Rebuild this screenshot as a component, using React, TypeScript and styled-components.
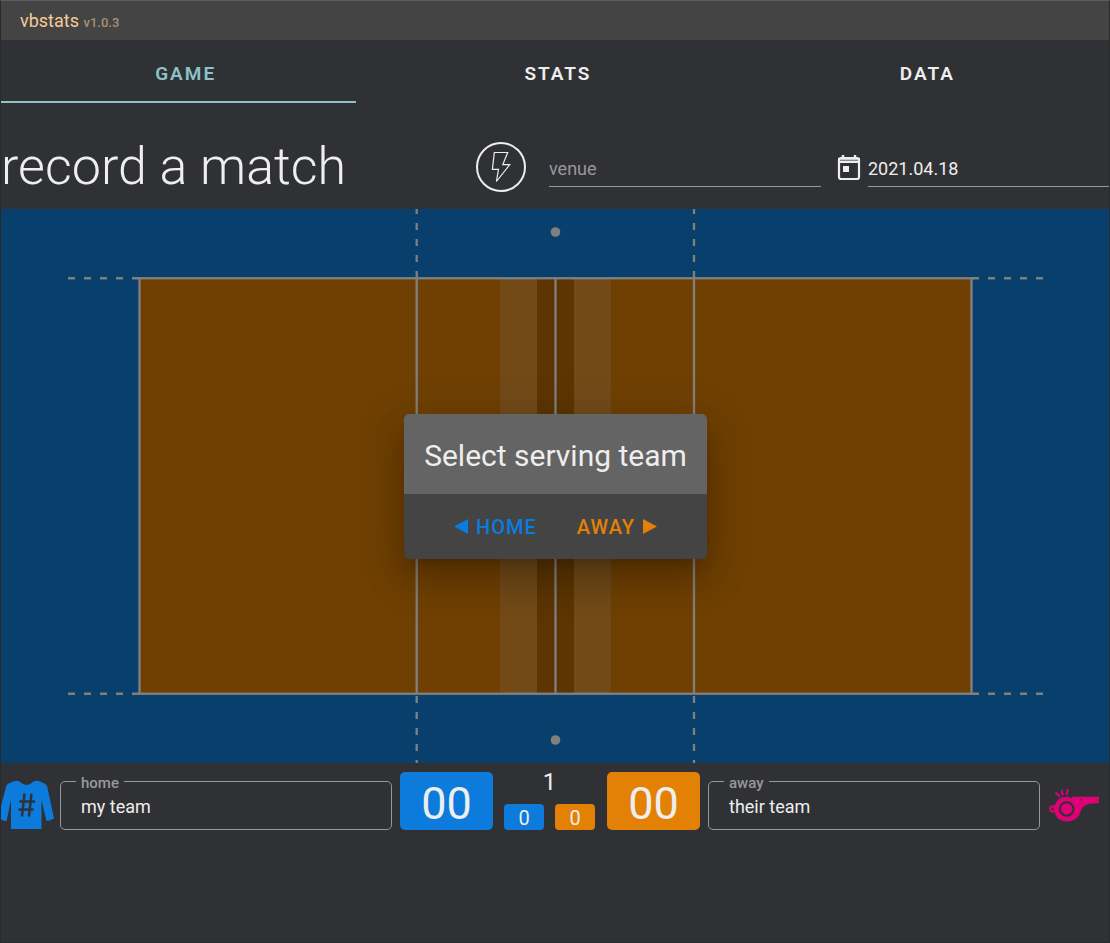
import React, { useState } from 'react';
import styled, { createGlobalStyle } from 'styled-components';

const color = {
  page: '#303135',
  bar: '#444444',
  text: '#eeeeee',
  muted: '#98989a',
  accent: '#8bc3c9',
  home: '#0d7bdc',
  away: '#e38107',
  line: '#808080',
  whistle: '#dd0077',
};

const GlobalStyle = createGlobalStyle`
  *, *::before, *::after { box-sizing: border-box; }
  html { background: ${color.page}; }
  body {
    margin: 0;
    font-family: Roboto, "Liberation Sans", sans-serif;
    color: ${color.text};
  }
  button, input { font-family: inherit; }
`;

const Shell = styled.div`
  min-height: 100vh;
  border: 1px solid #2a2a2c;
  border-top-color: #5a5b5f;
  background: ${color.page};
`;

const AppBar = styled.header`
  display: flex;
  align-items: center;
  height: 39px;
  padding: 2px 19px 0;
  background: ${color.bar};
`;

const Brand = styled.h1`
  margin: 0;
  font-size: 18px;
  line-height: 20px;
  font-weight: 400;
  color: #f5cb98;
`;

const Version = styled.small`
  font-size: 13px;
  font-weight: 500;
  color: #a88f74;
`;

const TabBar = styled.nav`
  display: flex;
`;

const Tab = styled.button<{ $active?: boolean }>`
  position: relative;
  flex: 1 1 auto;
  height: 63px;
  padding: 3px 24px 0;
  border: 0;
  background: none;
  color: ${(p) => (p.$active ? color.accent : color.text)};
  font-size: 19px;
  font-weight: 600;
  letter-spacing: 2px;
  cursor: pointer;
  &::after {
    content: '';
    display: ${(p) => (p.$active ? 'block' : 'none')};
    position: absolute;
    left: 0;
    right: 14px;
    bottom: 0;
    height: 2px;
    background: ${color.accent};
  }
`;

const MatchHeader = styled.section`
  display: grid;
  grid-template-columns: 1fr calc(25% - 5px) calc(25% - 5px);
  gap: 16px;
  align-items: center;
  height: 106px;
`;

const TitleCell = styled.div`
  display: flex;
  align-items: center;
  justify-content: space-between;
  padding: 22px 7px 0 0;
`;

const Title = styled.h2`
  margin: 0;
  font-size: 52px;
  line-height: 60px;
  font-weight: 300;
  white-space: nowrap;
`;

const RoundButton = styled.button`
  display: grid;
  place-items: center;
  width: 50px;
  height: 50px;
  padding: 0;
  border: 2px solid ${color.text};
  border-radius: 50%;
  background: none;
  cursor: pointer;
`;

const LineField = styled.label`
  display: flex;
  align-items: center;
  gap: 7px;
  padding-top: 22px;
`;

const LineInput = styled.input`
  flex: 1;
  min-width: 0;
  width: 100%;
  height: 40px;
  padding: 3px 0 0;
  border: 0;
  border-bottom: 1px solid ${color.muted};
  outline: 0;
  background: none;
  color: ${color.text};
  font-size: 18px;
  &::placeholder { color: ${color.muted}; opacity: 1; }
`;

const CourtArea = styled.main`
  position: relative;
  & > svg { display: block; width: 100%; height: auto; }
`;

const DialogLayer = styled.div`
  position: absolute;
  inset: 0;
  display: grid;
  place-items: center;
  padding: 1px 0 0 1px;
`;

const Dialog = styled.div`
  border-radius: 5px;
  overflow: hidden;
  background: ${color.bar};
  box-shadow: 0 11px 15px -7px rgba(0, 0, 0, 0.2), 0 24px 38px 3px rgba(0, 0, 0, 0.14),
    0 9px 46px 8px rgba(0, 0, 0, 0.12);
`;

const DialogTitle = styled.h3`
  margin: 0;
  padding: 24px 20px 20px;
  background: #646464;
  font-size: 30px;
  line-height: 36px;
  font-weight: 400;
  white-space: nowrap;
`;

const DialogActions = styled.div`
  display: flex;
  justify-content: center;
  gap: 20px;
  padding: 10px;
`;

const ActionButton = styled.button<{ $tone: string }>`
  display: flex;
  align-items: center;
  gap: 8px;
  height: 45px;
  padding: 0 10px;
  border: 0;
  background: none;
  color: ${(p) => p.$tone};
  font-size: 20px;
  font-weight: 500;
  letter-spacing: 1px;
  cursor: pointer;
`;

const ScoreRow = styled.footer`
  display: flex;
  align-items: flex-end;
  gap: 8px;
  padding-top: 9px;
`;

const IconButton = styled.button<{ $width: number }>`
  flex: none;
  width: ${(p) => p.$width}px;
  height: 52px;
  padding: 0;
  border: 0;
  background: none;
  text-align: left;
  cursor: pointer;
  & > svg { display: block; overflow: visible; }
`;

const OutlinedField = styled.label`
  position: relative;
  flex: 1;
  min-width: 0;
  height: 49px;
  border: 1px solid ${color.muted};
  border-radius: 5px;
`;

const FieldName = styled.span`
  position: absolute;
  top: -8px;
  left: 15px;
  padding: 0 5px;
  background: ${color.page};
  color: ${color.muted};
  font-size: 15px;
  font-weight: 500;
  line-height: 18px;
`;

const TeamInput = styled.input`
  display: block;
  width: 100%;
  height: 47px;
  padding: 2px 20px 0;
  border: 0;
  outline: 0;
  background: none;
  color: ${color.text};
  font-size: 18px;
`;

const Score = styled.button<{ $tone: string }>`
  flex: none;
  width: 93px;
  height: 58px;
  padding: 5px 0 0;
  border: 0;
  border-radius: 5px;
  background: ${(p) => p.$tone};
  color: ${color.text};
  font-size: 45px;
  line-height: 53px;
  cursor: pointer;
`;

const SetColumn = styled.div`
  flex: none;
  display: flex;
  flex-direction: column;
  align-items: center;
  gap: 12px;
  padding: 0 4px 0 3px;
`;

const SetNumber = styled.div`
  font-size: 24px;
  line-height: 20px;
`;

const SetScores = styled.div`
  display: flex;
  gap: 11px;
`;

const SetScore = styled.button<{ $tone: string }>`
  width: 40px;
  height: 26px;
  padding: 2px 0 0;
  border: 0;
  border-radius: 4px;
  background: ${(p) => p.$tone};
  color: ${color.text};
  font-size: 20px;
  line-height: 24px;
  cursor: pointer;
`;

const Bolt = () => (
  <svg width="20" height="32" viewBox="0 0 20 32" fill="none" stroke={color.text} strokeWidth="1.2" aria-hidden="true">
    <path d="M3.300 1.500H16.700L11.800 13.600H18.800L5.400 30.500L7.500 18.400H1.400Z" />
  </svg>
);

const Calendar = () => (
  <svg width="24" height="27" viewBox="0 0 24 27" aria-hidden="true">
    <rect x="2" y="4" width="20" height="21" rx="2" fill="none" stroke={color.text} strokeWidth="2.2" />
    <path d="M1 4H23V9H1Z" fill={color.text} />
    <path d="M3 6.300H21" stroke={color.page} strokeWidth="1.2" opacity="0.6" />
    <path d="M6 1V5M18 1V5" stroke={color.text} strokeWidth="2.4" />
    <rect x="6" y="12" width="6" height="6" fill={color.text} />
  </svg>
);

const Jersey = () => (
  <svg width="53" height="52" viewBox="0 0 53 52" aria-hidden="true">
    <path
      d="M5.200 8.500Q5.800 6.200 8 5.300L13 3.200Q15.500 2.300 18 3.200Q21.500 6.500 25.500 7Q29.500 6.500 33 3.200Q36 2.300 38.500 3.200L43 5.300Q45.500 6.200 46.200 8.500L53 40.500Q49 42.500 45.500 43L40.500 22V51H10V22L5.500 43Q2.500 43 0 41.500V28Z"
      fill={color.home}
    />
    <path d="M23.500 15.500L21 38.500M30.500 15.500L28 38.500M18.500 23.500H34M17.500 31.500H32.500" stroke={color.page} strokeWidth="2.400" fill="none" />
  </svg>
);

const Whistle = () => (
  <svg width="52" height="52" viewBox="0 0 52 52" fill={color.whistle} aria-hidden="true">
    <path d="M51 18.700V25L42 25.800C36.500 26.500 34 29.500 32.500 34C30.500 40 25.500 43.500 19 43.500C12.500 43.500 8.200 40 6.600 34.300C4.200 35.500 1 33.800 1 31C1 28.200 4.200 26.500 6.600 27.700C8.200 22 12.500 18.700 19 18.700H20.500L22.500 20.500L24.500 18.700Z" />
    <circle cx="4.600" cy="31" r="1.500" fill={color.page} />
    <circle cx="18.700" cy="31" r="6.800" fill="none" stroke={color.page} strokeWidth="2" />
    <circle cx="33" cy="21.500" r="0.800" fill={color.page} />
    <path d="M7.500 14.500L12 18.500M13.500 11.800L15 17.300M20 11L18.500 17" stroke={color.whistle} strokeWidth="2" />
  </svg>
);

/* A 24m x 12m floor at about 46px per metre, with the 18m x 9m court centred on it. */
const Court = () => (
  <svg viewBox="0 0 1108 554" role="img" aria-label="Volleyball court">
    <rect width="1108" height="554" fill="#083f6d" />
    <rect x="138.500" y="69.250" width="832" height="415.500" fill="#704003" />
    <rect x="499" y="69" width="37" height="416" fill="#724a18" />
    <rect x="573" y="69" width="37" height="416" fill="#724a18" />
    <rect x="536" y="69" width="37" height="416" fill="#5d3502" />
    <g stroke={color.line} strokeWidth="2.300" fill="none">
      <rect x="138.500" y="69.250" width="832" height="415.500" />
      <path d="M554.500 69V485M415.700 69V485M693 69V485" />
      <path
        strokeDasharray="7 9"
        d="M415.700 69V0M693 69V0M415.700 487V554M693 487V554M138 69.250H66M138 484.750H66M971 69.250H1043M971 484.750H1043"
      />
    </g>
    <circle cx="554.500" cy="23" r="4.800" fill={color.line} />
    <circle cx="554.500" cy="531" r="4.800" fill={color.line} />
  </svg>
);

export default function App() {
  const [tab, setTab] = useState('GAME');
  return (
    <>
      <GlobalStyle />
      <Shell>
        <AppBar>
          <Brand>
            vbstats <Version>v1.0.3</Version>
          </Brand>
        </AppBar>
        <TabBar>
          {['GAME', 'STATS', 'DATA'].map((name) => (
            <Tab key={name} $active={tab === name} onClick={() => setTab(name)}>
              {name}
            </Tab>
          ))}
        </TabBar>
        <MatchHeader>
          <TitleCell>
            <Title>record a match</Title>
            <RoundButton aria-label="Quick start">
              <Bolt />
            </RoundButton>
          </TitleCell>
          <LineField>
            <LineInput placeholder="venue" aria-label="venue" />
          </LineField>
          <LineField>
            <Calendar />
            <LineInput defaultValue="2021.04.18" aria-label="date" />
          </LineField>
        </MatchHeader>
        <CourtArea>
          <Court />
          <DialogLayer>
            <Dialog role="dialog" aria-labelledby="serving-title">
              <DialogTitle id="serving-title">Select serving team</DialogTitle>
              <DialogActions>
                <ActionButton $tone={color.home}>
                  <svg width="14" height="15" viewBox="0 0 14 15" fill="currentColor" aria-hidden="true">
                    <path d="M14 0V15L0 7.500Z" />
                  </svg>
                  HOME
                </ActionButton>
                <ActionButton $tone={color.away}>
                  AWAY
                  <svg width="14" height="15" viewBox="0 0 14 15" fill="currentColor" aria-hidden="true">
                    <path d="M0 0V15L14 7.500Z" />
                  </svg>
                </ActionButton>
              </DialogActions>
            </Dialog>
          </DialogLayer>
        </CourtArea>
        <ScoreRow>
          <IconButton $width={51} aria-label="Team players">
            <Jersey />
          </IconButton>
          <OutlinedField>
            <FieldName>home</FieldName>
            <TeamInput defaultValue="my team" />
          </OutlinedField>
          <Score $tone={color.home}>00</Score>
          <SetColumn>
            <SetNumber>1</SetNumber>
            <SetScores>
              <SetScore $tone={color.home}>0</SetScore>
              <SetScore $tone={color.away}>0</SetScore>
            </SetScores>
          </SetColumn>
          <Score $tone={color.away}>00</Score>
          <OutlinedField>
            <FieldName>away</FieldName>
            <TeamInput defaultValue="their team" />
          </OutlinedField>
          <IconButton $width={61} aria-label="Referee whistle">
            <Whistle />
          </IconButton>
        </ScoreRow>
      </Shell>
    </>
  );
}
